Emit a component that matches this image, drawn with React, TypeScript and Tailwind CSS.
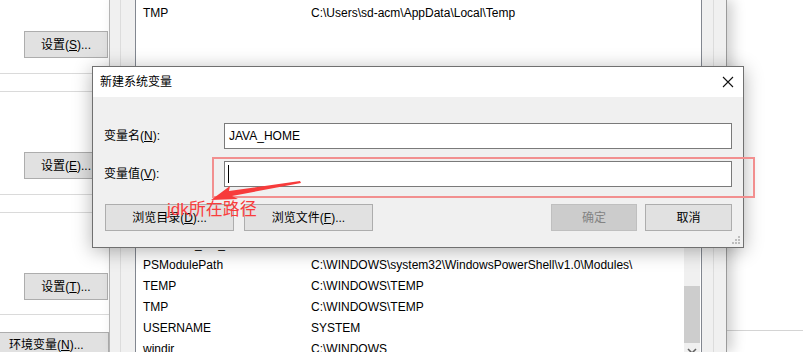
import React from 'react';

const font = { fontFamily: '"Liberation Sans", "Noto Sans CJK SC", sans-serif' };

function SideButton({ label, keyChar }: { label: string; keyChar: string }) {
  return (
    <div className="ml-[24px] w-[84px] h-[27px] bg-[#e1e1e1] border border-[#adadad] flex items-center justify-center text-[12px] text-black">
      {label}(<u>{keyChar}</u>)...
    </div>
  );
}

function Row({ name, value }: { name: string; value: string }) {
  return (
    <div className="h-[21px] flex items-center text-[12px] text-black whitespace-nowrap">
      <div className="w-[175px] pl-[7px] shrink-0">{name}</div>
      <div>{value}</div>
    </div>
  );
}

function DlgButton({ children, w, disabled }: { children: React.ReactNode; w: string; disabled?: boolean }) {
  return (
    <div
      className={`${w} h-[27px] flex items-center justify-center text-[12px] border ${
        disabled ? 'bg-[#cccccc] border-[#bfbfbf] text-[#838383]' : 'bg-[#e1e1e1] border-[#adadad] text-black'
      }`}
    >
      {children}
    </div>
  );
}

export default function App() {
  return (
    <div className="relative w-[803px] h-[352px] overflow-hidden bg-white" style={font}>
      {/* background windows */}
      <div className="flex h-full">
        {/* system properties panel */}
        <div className="w-[109px] shrink-0 flex flex-col bg-white">
          <div className="h-[31px]" />
          <SideButton label="设置" keyChar="S" />
          <div className="h-[15px]" />
          <div className="h-px bg-[#dadada]" />
          <div className="h-[17px]" />
          <div className="h-px bg-[#dadada]" />
          <div className="h-[60px]" />
          <SideButton label="设置" keyChar="E" />
          <div className="h-[15px]" />
          <div className="h-px bg-[#dadada]" />
          <div className="h-[17px]" />
          <div className="h-px bg-[#dadada]" />
          <div className="h-[60px]" />
          <SideButton label="设置" keyChar="T" />
          <div className="h-[14px]" />
          <div className="h-px bg-[#dadada]" />
          <div className="h-[17px]" />
          <div className="h-[20px] bg-[#e1e1e1] border-t border-r border-[#adadad] pl-[9px] pt-[3px] text-[12px] text-black">
            环境变量(<u>N</u>)...
          </div>
        </div>

        {/* environment variables window */}
        <div className="w-[618px] shrink-0 flex h-full relative z-10 shadow-[6px_0_12px_rgba(0,0,0,0.18)]">
          <div className="w-[26px] bg-[#f0f0f0] border-l border-[#b4b4b4] flex">
            <div className="w-[11px] border-r border-[#dcdcdc]" />
          </div>
          <div className="w-[567px] bg-white border-x border-[#828790] flex flex-col">
            <div className="mt-[2px]">
              <Row name="TMP" value="C:\Users\sd-acm\AppData\Local\Temp" />
            </div>
            <div className="mt-[210px] flex">
              <div className="w-[548px]">
                <Row name="NUMBER_OF_PROCESSORS" value="8" />
                <Row name="PSModulePath" value="C:\WINDOWS\system32\WindowsPowerShell\v1.0\Modules\" />
                <Row name="TEMP" value="C:\WINDOWS\TEMP" />
                <Row name="TMP" value="C:\WINDOWS\TEMP" />
                <Row name="USERNAME" value="SYSTEM" />
                <Row name="windir" value="C:\WINDOWS" />
              </div>
              <div className="w-[16px] bg-[#f0f0f0] flex flex-col items-center">
                <div className="mt-[53px] w-full h-[57px] bg-[#cdcdcd]" />
                <svg width="10" height="8" viewBox="0 0 10 8" className="mt-[5px]">
                  <path d="M1 1 L5 5 L9 1" stroke="#606060" strokeWidth="1.5" fill="none" />
                </svg>
              </div>
            </div>
          </div>
          <div className="w-[25px] bg-[#f0f0f0] border-r border-[#9a9a9a] flex">
            <div className="w-[12px] border-r border-[#dcdcdc]" />
          </div>
        </div>

        {/* area to the right */}
        <div className="flex-1 bg-white flex flex-col">
          <div className="h-[330px]" />
          <div className="h-px bg-[#d4d4d4]" />
        </div>
      </div>

      {/* new system variable dialog */}
      <div className="absolute left-[92px] top-[66px] z-20 w-[652px] h-[182px] border border-[#707070] bg-[#f0f0f0] flex flex-col shadow-[0_3px_18px_rgba(0,0,0,0.3)]">
        <div className="h-[30px] bg-white flex items-center justify-between pl-[7px] pr-[9px] text-[12px] text-black">
          <span>新建系统变量</span>
          <svg width="12" height="12" viewBox="0 0 12 12">
            <path d="M1 1 L11 11 M11 1 L1 11" stroke="#111" strokeWidth="1.1" />
          </svg>
        </div>
        <div className="flex-1 flex flex-col pt-[26px] pl-[11px] pr-[11px] relative">
          <div className="flex items-center h-[26px]">
            <div className="w-[120px] text-[12px] text-black">变量名(<u>N</u>):</div>
            <div className="flex-1 h-[26px] bg-white border border-[#7a7a7a] flex items-center pl-[4px] text-[12px] text-black">
              JAVA_HOME
            </div>
          </div>
          <div className="flex items-center h-[26px] mt-[12px]">
            <div className="w-[120px] text-[12px] text-black">变量值(<u>V</u>):</div>
            <div className="flex-1 h-[26px] bg-white border border-[#7a7a7a] flex items-center pl-[3px]">
              <div className="w-px h-[18px] bg-black" />
            </div>
          </div>
          <div className="flex items-center mt-[17px] pl-px">
            <DlgButton w="w-[129px]">
              浏览目录(<u>D</u>)...
            </DlgButton>
            <div className="w-[10px]" />
            <DlgButton w="w-[129px]">
              浏览文件(<u>F</u>)...
            </DlgButton>
            <div className="flex-1" />
            <DlgButton w="w-[86px]" disabled>
              确定
            </DlgButton>
            <div className="w-[8px]" />
            <DlgButton w="w-[87px]">取消</DlgButton>
          </div>
          <svg width="9" height="9" viewBox="0 0 9 9" className="absolute right-[2px] bottom-[2px]">
            <rect x="6" y="0" width="2" height="2" fill="#bdbdbd" />
            <rect x="3" y="3" width="2" height="2" fill="#bdbdbd" />
            <rect x="6" y="3" width="2" height="2" fill="#bdbdbd" />
            <rect x="0" y="6" width="2" height="2" fill="#bdbdbd" />
            <rect x="3" y="6" width="2" height="2" fill="#bdbdbd" />
            <rect x="6" y="6" width="2" height="2" fill="#bdbdbd" />
          </svg>
        </div>
      </div>

      {/* annotation */}
      <div className="absolute left-[212px] top-[157px] z-30 w-[543px] h-[41px] border-2 border-[#f28f8f]" />
      <svg width="100" height="30" viewBox="0 0 100 30" className="absolute left-[205px] top-[175px] z-30">
        <polygon points="6,25 25,11 24,16 95,6 96,8 27,21 33,24" fill="#f73b3b" />
      </svg>
      <div className="absolute left-[167px] top-[201px] z-30 text-[17px] leading-[17px] text-[#f93c3c] whitespace-nowrap">
        jdk所在路径
      </div>
    </div>
  );
}
